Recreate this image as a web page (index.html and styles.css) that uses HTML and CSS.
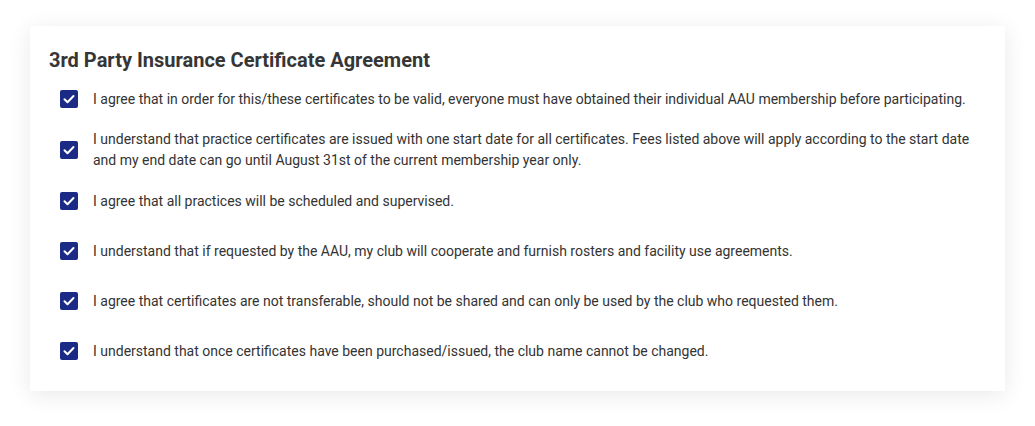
FILE: index.html
```html
<!DOCTYPE html>
<html lang="en">
  <head>
    <meta charset="UTF-8" />
    <meta name="viewport" content="width=device-width, initial-scale=1.0" />
    <title>3rd Party Insurance Certificate Agreement</title>
    <link rel="stylesheet" href="styles.css">
  </head>
  <body>
    <div class="card">
      <h2>3rd Party Insurance Certificate Agreement</h2>
      <div class="agreements">
        <label class="agree-row">
          <input type="checkbox" checked />
          <span class="box"><svg viewBox="0 0 18 18"><path d="M4.5 9.2l3 3 6-6.2" /></svg></span>
          <span class="agree-text">I agree that in order for this/these certificates to be valid, everyone must have obtained their individual AAU membership before participating.</span>
        </label>
        <label class="agree-row">
          <input type="checkbox" checked />
          <span class="box"><svg viewBox="0 0 18 18"><path d="M4.5 9.2l3 3 6-6.2" /></svg></span>
          <span class="agree-text">I understand that practice certificates are issued with one start date for all certificates. Fees listed above will apply according to the start date and my end date can go until August 31st of the current membership year only.</span>
        </label>
        <label class="agree-row">
          <input type="checkbox" checked />
          <span class="box"><svg viewBox="0 0 18 18"><path d="M4.5 9.2l3 3 6-6.2" /></svg></span>
          <span class="agree-text">I agree that all practices will be scheduled and supervised.</span>
        </label>
        <label class="agree-row">
          <input type="checkbox" checked />
          <span class="box"><svg viewBox="0 0 18 18"><path d="M4.5 9.2l3 3 6-6.2" /></svg></span>
          <span class="agree-text">I understand that if requested by the AAU, my club will cooperate and furnish rosters and facility use agreements.</span>
        </label>
        <label class="agree-row">
          <input type="checkbox" checked />
          <span class="box"><svg viewBox="0 0 18 18"><path d="M4.5 9.2l3 3 6-6.2" /></svg></span>
          <span class="agree-text">I agree that certificates are not transferable, should not be shared and can only be used by the club who requested them.</span>
        </label>
        <label class="agree-row">
          <input type="checkbox" checked />
          <span class="box"><svg viewBox="0 0 18 18"><path d="M4.5 9.2l3 3 6-6.2" /></svg></span>
          <span class="agree-text">I understand that once certificates have been purchased/issued, the club name cannot be changed.</span>
        </label>
      </div>
    </div>
  </body>
</html>
```

FILE: styles.css
```css
body {
  font-family: Roboto, "Liberation Sans", sans-serif;
  color: #333;
  margin: 0;
  padding: 26px 30px 35px 30px;
  background-color: #fff;
}
.card {
  background-color: #fff;
  box-shadow: 0 4px 22px rgba(0, 0, 0, 0.09);
  padding: 20px 19px 20px 19px;
}
h2 {
  font-size: 20px;
  font-weight: 700;
  color: #363636;
  margin: 0 0 5px 0;
  line-height: 28px;
}
.agreements {
  display: flex;
  flex-direction: column;
  gap: 10px;
  padding-left: 11px;
}
.agree-row {
  display: flex;
  align-items: center;
  min-height: 40px;
  cursor: pointer;
}
.agree-row input {
  display: none;
}
.box {
  flex: 0 0 18px;
  width: 18px;
  height: 18px;
  border-radius: 2px;
  background-color: #1b2a85;
  margin-right: 15px;
  display: flex;
}
.box svg {
  width: 18px;
  height: 18px;
}
.box path {
  fill: none;
  stroke: #fff;
  stroke-width: 2;
  stroke-linecap: round;
  stroke-linejoin: round;
}
.agree-text {
  font-size: 14px;
  line-height: 21px;
  color: #333;
  padding-right: 8px;
}
```
